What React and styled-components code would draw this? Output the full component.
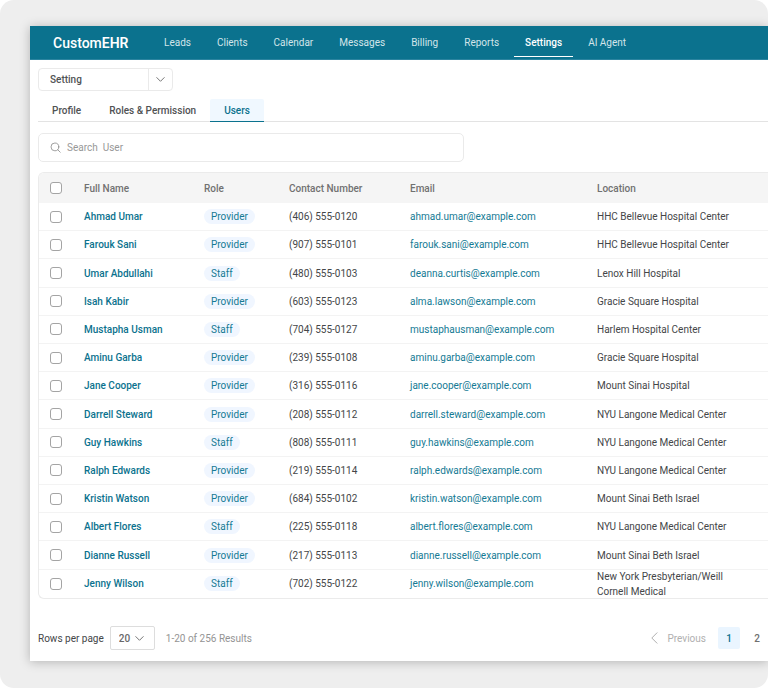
import React from "react";
import styled, { createGlobalStyle } from "styled-components";

const GlobalStyle = createGlobalStyle`
  *, *::before, *::after { box-sizing: border-box; }
  body {
    margin: 0;
    background: #fff;
    color: #444648;
    font-family: Roboto, "Liberation Sans", sans-serif;
    font-size: 10px;
    line-height: 15px;
  }
  button, input, select { font: inherit; color: inherit; }
  a { color: inherit; text-decoration: none; }
`;

const Backdrop = styled.div`
  display: flex;
  flex-direction: column;
  min-height: 100vh;
  padding: 26px 0 27px 30px;
  background: #eeeeee;
  border-radius: 14px;
  overflow: hidden;
`;

const Window = styled.div`
  display: flex;
  flex: 1;
  flex-direction: column;
  background: #fff;
  box-shadow: 0 1px 10px rgba(0, 0, 0, 0.25);
`;

const Header = styled.header`
  display: flex;
  align-items: center;
  height: 34px;
  padding-left: 23px;
  background: #0b728e;
  border-bottom: 1px solid #2b84a0;
  color: #fff;
`;

const Brand = styled.a`
  width: 100px;
  font-size: 14px;
  font-weight: 500;
  line-height: 20px;
`;

const Strong = styled.span`
  font-weight: 600;
`;

const Nav = styled.nav`
  display: flex;
  align-self: stretch;
  gap: 4px;
  padding-bottom: 2px;
`;

const NavLink = styled.a`
  display: flex;
  align-items: center;
  padding: 2px 11px 0;
  border-bottom: 1px solid ${(p) => (p.$active ? "#fff" : "transparent")};
  color: ${(p) => (p.$active ? "#fff" : "#d3e5ea")};
  font-weight: ${(p) => (p.$active ? 500 : 400)};
`;

const Main = styled.main`
  display: flex;
  flex: 1;
  flex-direction: column;
  padding: 8px 0 11px 8px;
`;

const SelectBox = styled.label`
  position: relative;
  display: flex;
  align-items: center;
  width: ${(p) => (p.$wide ? 135 : 45)}px;
  height: ${(p) => (p.$wide ? 23 : 24)}px;
  border: 1px solid ${(p) => (p.$wide ? "#eaeaea" : "#dddddd")};
  border-radius: ${(p) => (p.$wide ? 4 : 2)}px;
  color: ${(p) => (p.$wide ? "#505254" : "#686868")};
  font-weight: 500;
`;

const Select = styled.select`
  appearance: none;
  width: 100%;
  height: 100%;
  padding: 0 ${(p) => (p.$wide ? 30 : 16)}px 0 ${(p) => (p.$wide ? 11 : 8)}px;
  border: 0;
  background: transparent;
`;

const Arrow = styled.span`
  position: absolute;
  top: 0;
  right: 0;
  bottom: 0;
  display: grid;
  place-items: center;
  width: ${(p) => (p.$wide ? 24 : 28)}px;
  border-left: ${(p) => (p.$wide ? "1px solid #eaeaea" : "0")};
  color: #666;
  pointer-events: none;
`;

const Tabs = styled.div`
  display: flex;
  margin-top: 8px;
  height: 23px;
  border-bottom: 1px solid #e3e3e3;
`;

const Tab = styled.button`
  height: 23px;
  padding: 0 14px;
  border: 0;
  border-bottom: 1px solid ${(p) => (p.$active ? "#0b728e" : "#e3e3e3")};
  border-radius: 2px 2px 0 0;
  background: ${(p) => (p.$active ? "#f0f8ff" : "transparent")};
  color: ${(p) => (p.$active ? "#0b728e" : "#505254")};
  font-weight: 500;
  white-space: nowrap;
`;

const SearchBox = styled.label`
  display: flex;
  align-items: center;
  gap: 6px;
  width: 426px;
  max-width: 100%;
  height: 29px;
  margin: 11px 0 10px;
  padding: 0 11px;
  border: 1px solid #eaeaea;
  border-radius: 5px;
  color: #888;
`;

const SearchInput = styled.input`
  flex: 1;
  min-width: 0;
  padding: 0;
  border: 0;
  outline: 0;
  background: transparent;
  &::placeholder { color: #989898; opacity: 1; white-space: pre; }
`;

const TableCard = styled.div`
  display: grid;
  flex: 1;
  border: 1px solid #ebebeb;
  border-right: 0;
  border-radius: 6px 0 0 6px;
  overflow: hidden;
`;

const Table = styled.table`
  width: 100%;
  table-layout: fixed;
  border-collapse: separate;
  border-spacing: 0;
`;

const Col = styled.col`
  width: ${(p) => (p.$w ? `${p.$w}px` : "auto")};
`;

const HeadCell = styled.th`
  height: 30px;
  padding: 0;
  background: #f5f5f5;
  color: #717171;
  font-weight: 500;
  text-align: left;
`;

const Row = styled.tr`
  &:not(:last-child) td { border-bottom: 1px solid #f3f3f3; }
`;

const Cell = styled.td`
  height: 28px;
  padding: 0;
  white-space: nowrap;
`;

const Location = styled.div`
  max-width: 140px;
  margin: -1px 0;
  white-space: normal;
`;

const Name = styled.a`
  color: #0b728e;
  font-weight: 500;
`;

const Email = styled.a`
  color: #147a94;
`;

const Badge = styled.span`
  display: inline-block;
  padding: 0 7px;
  border-radius: 8px;
  background: #f0f6ff;
  color: #147a94;
`;

const Check = styled.input`
  appearance: none;
  display: block;
  width: 12px;
  height: 12px;
  margin: 0 0 0 11px;
  border: 1px solid #a4a4a4;
  border-radius: 3px;
  background: #fff;
  &:checked { background: #0b728e; }
`;

const Footer = styled.footer`
  display: flex;
  align-items: center;
  margin-top: 27px;
`;

const RowsLabel = styled.span`
  margin-right: 6px;
`;

const Results = styled.span`
  margin-left: 11px;
  color: #949494;
`;

const Pager = styled.nav`
  display: flex;
  align-items: center;
  margin-left: auto;
`;

const Previous = styled.button`
  display: flex;
  align-items: center;
  gap: 10px;
  margin-right: 12px;
  padding: 0;
  border: 0;
  background: none;
  color: #b0b0b0;
`;

const PageButton = styled.button`
  width: 22px;
  height: 22px;
  margin-left: ${(p) => (p.$active ? 0 : 6)}px;
  padding: 0;
  border: 0;
  border-radius: 2px;
  background: ${(p) => (p.$active ? "#eaf5ff" : "transparent")};
  color: ${(p) => (p.$active ? "#0b728e" : "#707070")};
  font-weight: 500;
`;

const Chevron = () => (
  <svg width="9" height="5" viewBox="0 0 9 5" fill="none" stroke="currentColor" strokeWidth=".9" strokeLinecap="round" strokeLinejoin="round" aria-hidden="true">
    <path d="M.8.6 4.5 4.3 8.2.6" />
  </svg>
);

const BackIcon = () => (
  <svg width="7" height="12" viewBox="0 0 7 12" fill="none" stroke="currentColor" strokeLinecap="round" strokeLinejoin="round" aria-hidden="true">
    <path d="M6 .8.8 6 6 11.2" />
  </svg>
);

const SearchIcon = () => (
  <svg width="11" height="11" viewBox="0 0 11 11" fill="none" stroke="currentColor" strokeWidth=".8" strokeLinecap="round" aria-hidden="true">
    <circle cx="4.9" cy="4.9" r="3.9" />
    <path d="m7.8 7.8 2.4 2.4" />
  </svg>
);

const navItems = ["Leads", "Clients", "Calendar", "Messages", "Billing", "Reports", "Settings", "AI Agent"];
const tabs = ["Profile", "Roles & Permission", "Users"];
const bellevue = "HHC Bellevue Hospital Center";
const langone = "NYU Langone Medical Center";

const users = [
  ["Ahmad Umar", "Provider", "(406) 555-0120", "ahmad.umar@example.com", bellevue],
  ["Farouk Sani", "Provider", "(907) 555-0101", "farouk.sani@example.com", bellevue],
  ["Umar Abdullahi", "Staff", "(480) 555-0103", "deanna.curtis@example.com", "Lenox Hill Hospital"],
  ["Isah Kabir", "Provider", "(603) 555-0123", "alma.lawson@example.com", "Gracie Square Hospital"],
  ["Mustapha Usman", "Staff", "(704) 555-0127", "mustaphausman@example.com", "Harlem Hospital Center"],
  ["Aminu Garba", "Provider", "(239) 555-0108", "aminu.garba@example.com", "Gracie Square Hospital"],
  ["Jane Cooper", "Provider", "(316) 555-0116", "jane.cooper@example.com", "Mount Sinai Hospital"],
  ["Darrell Steward", "Provider", "(208) 555-0112", "darrell.steward@example.com", langone],
  ["Guy Hawkins", "Staff", "(808) 555-0111", "guy.hawkins@example.com", langone],
  ["Ralph Edwards", "Provider", "(219) 555-0114", "ralph.edwards@example.com", langone],
  ["Kristin Watson", "Provider", "(684) 555-0102", "kristin.watson@example.com", "Mount Sinai Beth Israel"],
  ["Albert Flores", "Staff", "(225) 555-0118", "albert.flores@example.com", langone],
  ["Dianne Russell", "Provider", "(217) 555-0113", "dianne.russell@example.com", "Mount Sinai Beth Israel"],
  ["Jenny Wilson", "Staff", "(702) 555-0122", "jenny.wilson@example.com", "New York Presbyterian/Weill Cornell Medical"],
];

export default function App() {
  return (
    <>
      <GlobalStyle />
      <Backdrop>
        <Window>
          <Header>
            <Brand href="#">Custom<Strong>EHR</Strong></Brand>
            <Nav aria-label="Main">
              {navItems.map((n) => (
                <NavLink key={n} href="#" $active={n === "Settings"}>{n}</NavLink>
              ))}
            </Nav>
          </Header>
          <Main>
            <SelectBox $wide>
              <Select $wide aria-label="Section" defaultValue="Setting">
                <option>Setting</option>
              </Select>
              <Arrow $wide><Chevron /></Arrow>
            </SelectBox>
            <Tabs role="tablist">
              {tabs.map((t) => (
                <Tab key={t} role="tab" aria-selected={t === "Users"} $active={t === "Users"}>{t}</Tab>
              ))}
            </Tabs>
            <SearchBox>
              <SearchIcon />
              <SearchInput type="search" aria-label="Search User" placeholder="Search  User" />
            </SearchBox>
            <TableCard>
              <Table>
                <colgroup>
                  <Col $w={45} /><Col $w={120} /><Col $w={85} /><Col $w={121} /><Col $w={187} /><Col />
                </colgroup>
                <thead>
                  <tr>
                    <HeadCell><Check type="checkbox" aria-label="Select all users" /></HeadCell>
                    {["Full Name", "Role", "Contact Number", "Email", "Location"].map((h) => (
                      <HeadCell key={h} scope="col">{h}</HeadCell>
                    ))}
                  </tr>
                </thead>
                <tbody>
                  {users.map(([name, role, phone, email, location]) => (
                    <Row key={name}>
                      <Cell><Check type="checkbox" aria-label={`Select ${name}`} /></Cell>
                      <Cell><Name href="#">{name}</Name></Cell>
                      <Cell><Badge>{role}</Badge></Cell>
                      <Cell>{phone}</Cell>
                      <Cell><Email href={`mailto:${email}`}>{email}</Email></Cell>
                      <Cell><Location>{location}</Location></Cell>
                    </Row>
                  ))}
                </tbody>
              </Table>
            </TableCard>
            <Footer>
              <RowsLabel id="rows-label">Rows per page</RowsLabel>
              <SelectBox>
                <Select aria-labelledby="rows-label" defaultValue="20">
                  <option>20</option>
                </Select>
                <Arrow><Chevron /></Arrow>
              </SelectBox>
              <Results>1-20 of 256 Results</Results>
              <Pager aria-label="Pages">
                <Previous><BackIcon />Previous</Previous>
                <PageButton $active aria-current="page">1</PageButton>
                <PageButton>2</PageButton>
              </Pager>
            </Footer>
          </Main>
        </Window>
      </Backdrop>
    </>
  );
}
